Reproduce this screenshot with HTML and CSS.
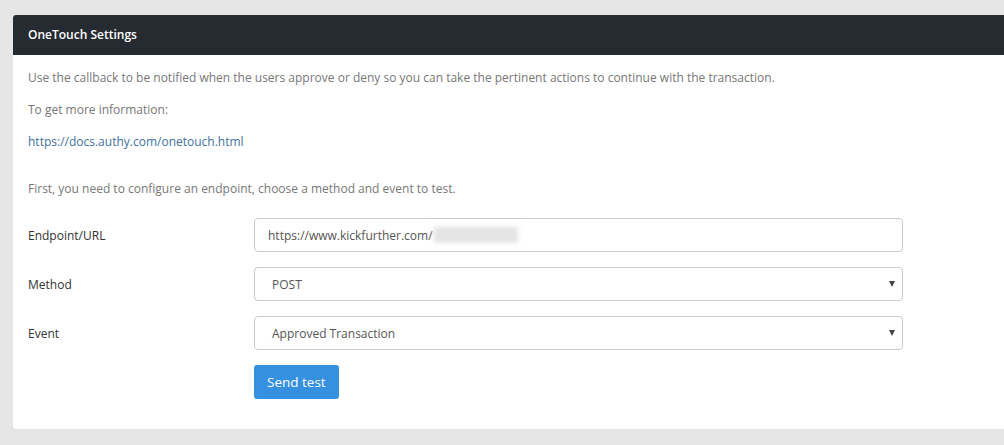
FILE: index.html
```html
<!DOCTYPE html>
<html>
<head>
<meta charset="utf-8">
<link rel="stylesheet" href="styles.css">
</head>
<body>
<div class="card">
  <div class="card-header">OneTouch Settings</div>
  <div class="card-body">
    <p class="text">Use the callback to be notified when the users approve or deny so you can take the pertinent actions to continue with the transaction.</p>
    <p class="text">To get more information:</p>
    <p class="text link-row"><a class="link" href="#">https://docs.authy.com/onetouch.html</a></p>
    <p class="text">First, you need to configure an endpoint, choose a method and event to test.</p>
    <div class="form">
      <label class="label">Endpoint/URL</label>
      <div class="control input">https://www.kickfurther.com/<span class="blurred"></span></div>
      <label class="label">Method</label>
      <div class="control select">POST<span class="caret"></span></div>
      <label class="label">Event</label>
      <div class="control select">Approved Transaction<span class="caret"></span></div>
      <div></div>
      <div><button class="btn">Send test</button></div>
    </div>
  </div>
</div>
</body>
</html>
```
FILE: styles.css
```css
html, body {
  margin: 0;
  padding: 0;
  background: #e6e6e6;
  overflow: hidden;
}
body {
  padding: 15px 0 0 13px;
  font-family: "Open Sans", "Liberation Sans", sans-serif;
  font-size: 12px;
  color: #333;
}
.card {
  width: 1010px;
  background: #fff;
  border-radius: 3px;
  overflow: hidden;
}
.card-header {
  height: 40px;
  line-height: 40px;
  background: #262a31;
  color: #fff;
  font-weight: 600;
  padding-left: 15px;
}
.card-body {
  padding: 13px 15px 30px 15px;
}
.text {
  margin: 0 0 12px 0;
  line-height: 20px;
  color: #777;
}
.link-row {
  margin-bottom: 27px;
}
.link {
  color: #42719c;
  text-decoration: none;
}
.form {
  display: grid;
  grid-template-columns: 226px 649px;
  row-gap: 15px;
  margin-top: 19px;
}
.label {
  display: flex;
  align-items: center;
  height: 34px;
  color: #333;
}
.control {
  position: relative;
  box-sizing: border-box;
  height: 34px;
  border: 1px solid #ccc;
  border-radius: 4px;
  display: flex;
  align-items: center;
  color: #555;
  background: #fff;
}
.input {
  padding-left: 13px;
}
.select {
  padding-left: 17px;
}
.blurred {
  display: inline-block;
  width: 84px;
  height: 16px;
  margin-left: 1px;
  background: #e4e4e4;
  filter: blur(2px);
}
.caret {
  position: absolute;
  right: 7px;
  top: 13px;
  width: 0;
  height: 0;
  border-left: 3.5px solid transparent;
  border-right: 3.5px solid transparent;
  border-top: 6px solid #444;
}
.btn {
  height: 34px;
  padding: 0 13px;
  border: none;
  border-radius: 3px;
  background: #3590e0;
  color: #fff;
  font-family: "Open Sans", "Liberation Sans", sans-serif;
  font-size: 13.5px;
}
```
